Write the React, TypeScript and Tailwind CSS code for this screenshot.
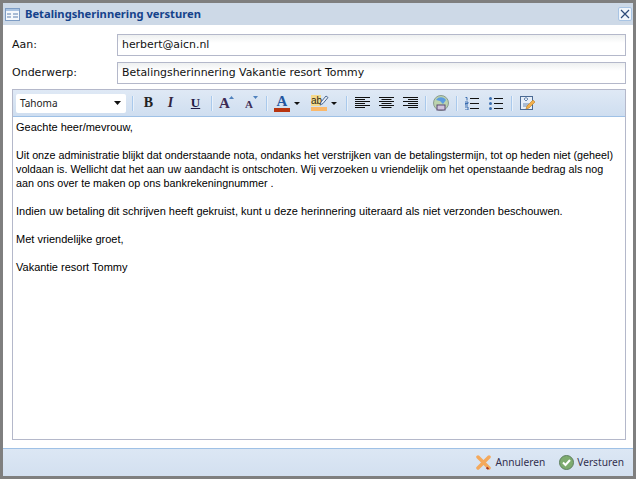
const Sep = () => (
  <div className="h-[15px] w-[2px] border-l border-[#a9c9ec] bg-[#e9f1fa]" />
);

const Lines = ({ kind }: { kind: "left" | "center" | "right" }) => {
  const rows = [15, 10, 15, 10, 15, 10];
  return (
    <svg width="15" height="12" viewBox="0 0 15 12">
      {rows.map((w, i) => {
        const x = kind === "left" ? 0 : kind === "center" ? (15 - w) / 2 : 15 - w;
        return <rect key={i} x={x} y={i * 2} width={w} height="1" fill="#111" />;
      })}
    </svg>
  );
};

const Caret = () => (
  <svg width="6" height="3" viewBox="0 0 6 3">
    <path d="M0 0h6L3 3z" fill="#111" />
  </svg>
);

const labelCls = "w-[105px] pt-[1px] font-['DejaVu_Sans',sans-serif] text-[11px] text-[#111]";
const inputCls =
  "flex h-[22px] flex-1 items-center border border-[#b4b8ca] bg-gradient-to-b from-[#eef0f0] to-white to-40% pl-[4px] pt-[1px] font-['DejaVu_Sans',sans-serif] text-[10.9px] text-[#111]";

export default function App() {
  return (
    <div className="flex h-[479px] w-[636px] flex-col overflow-hidden border-[3px] border-[#7f7f7f] bg-white font-['Liberation_Sans',sans-serif]">
      <div className="flex h-[22px] shrink-0 items-center bg-[#cdd9e7] pl-[2px] pr-[1px]">
        <svg width="15" height="13" viewBox="0 0 15 13" className="mr-[5px]">
          <rect x="0.5" y="0.5" width="14" height="12" fill="#f4f8fc" stroke="#7d9cc4" />
          <rect x="1" y="1" width="13" height="2" fill="#a9c3e2" />
          <path d="M2 6h4M2 9h4M8 6h5M8 9h5" stroke="#5b7fae" />
        </svg>
        <span className="font-['Noto_Sans',sans-serif] text-[11.2px] font-bold text-[#15428b]">
          Betalingsherinnering versturen
        </span>
        <button className="ml-auto flex h-[14px] w-[14px] items-center justify-center rounded-[2px] border border-[#a8c4e4] bg-[#f0f5fb]">
          <svg width="10" height="10" viewBox="0 0 10 10">
            <path d="M1 1l8 8M9 1l-8 8" stroke="#2c4a78" strokeWidth="1.2" />
          </svg>
        </button>
      </div>

      <div className="flex min-h-0 flex-1 flex-col pl-[9px] pr-[7px] pt-[9px] pb-[8px]">
        <div className="flex h-[22px] items-center">
          <label className={labelCls}>Aan:</label>
          <div className={inputCls}>herbert@aicn.nl</div>
        </div>
        <div className="mt-[6px] flex h-[22px] items-center">
          <label className={labelCls}>Onderwerp:</label>
          <div className={inputCls}>Betalingsherinnering Vakantie resort Tommy</div>
        </div>

        <div className="mt-[5px] flex min-h-0 flex-1 flex-col border border-[#b4b8ca]">
          <div className="flex h-[27px] shrink-0 items-center border-b border-[#9fc1e6] bg-gradient-to-b from-[#dfe9f5] to-[#cfdef0] pl-[3px]">
            <div className="flex h-[19px] w-[110px] items-center justify-between rounded-[2px] bg-white pl-[4px] pr-[5px] font-['Noto_Sans',sans-serif] text-[10px] text-[#222]">
              Tahoma
              <svg width="7" height="4" viewBox="0 0 7 4">
                <path d="M0 0h7L3.5 4z" fill="#111" />
              </svg>
            </div>
            <div className="ml-[6px]">
              <Sep />
            </div>
            <div className="ml-[5px] flex w-[19px] justify-center font-['Liberation_Serif',serif] text-[14px] leading-[16px] font-bold text-[#222]">B</div>
            <div className="ml-[3px] flex w-[19px] justify-center font-['Liberation_Serif',serif] text-[14px] leading-[16px] font-bold italic text-[#33243f]">I</div>
            <div className="ml-[6px] flex w-[19px] justify-center font-['Liberation_Serif',serif] text-[13px] leading-[16px] font-bold text-[#1f1b45] underline">U</div>
            <div className="ml-[6px]">
              <Sep />
            </div>
            <div className="ml-[6px] flex h-[16px] w-[15px] items-start">
              <span className="w-[10px] font-['Liberation_Serif',serif] text-[15px] leading-[17px] font-bold text-[#3d2c55]">A</span>
              <svg width="5" height="3" viewBox="0 0 5 3" className="mt-[1px]">
                <path d="M0 3h5L2.500 0z" fill="#4f81bd" />
              </svg>
            </div>
            <div className="ml-[11px] flex h-[16px] w-[13px] items-start">
              <span className="mt-[2px] w-[8px] font-['Liberation_Serif',serif] text-[11px] leading-[15px] font-bold text-[#3d2c55]">A</span>
              <svg width="5" height="3" viewBox="0 0 5 3" className="mt-[1px]">
                <path d="M0 0h5L2.500 3z" fill="#4f81bd" />
              </svg>
            </div>
            <div className="ml-[8px]">
              <Sep />
            </div>
            <div className="ml-[6px] flex w-[16px] flex-col items-center">
              <span className="h-[12px] font-['Liberation_Serif',serif] text-[15px] leading-[13px] font-bold text-[#24569f]">A</span>
              <span className="mt-[1px] h-[4px] w-[16px] bg-[#b8340f]" />
            </div>
            <div className="ml-[4px]">
              <Caret />
            </div>
            <div className="relative ml-[11px] flex w-[16px] flex-col items-start">
              <span className="h-[11px] w-[10px] bg-[#f5d98a] font-['Liberation_Sans',sans-serif] text-[10px] leading-[11px] text-[#2e2a18]">ab</span>
              <span className="mt-[1px] h-[4px] w-[16px] bg-[#fbb869]" />
              <svg width="10" height="11" viewBox="0 0 10 11" className="absolute left-[8px] top-0">
                <path d="M1 10l1-3 5-6 2 1.500-5 6z" fill="#e8eef7" stroke="#3c5a85" strokeWidth="0.9" />
              </svg>
            </div>
            <div className="ml-[4px]">
              <Caret />
            </div>
            <div className="ml-[9px]">
              <Sep />
            </div>
            <div className="ml-[7px]">
              <Lines kind="left" />
            </div>
            <div className="ml-[9px]">
              <Lines kind="center" />
            </div>
            <div className="ml-[9px]">
              <Lines kind="right" />
            </div>
            <div className="ml-[7px]">
              <Sep />
            </div>
            <svg width="16" height="16" viewBox="0 0 16 16" className="ml-[6px]">
              <circle cx="8" cy="8" r="7.500" fill="#bcd3ae" stroke="#8a9c92" />
              <path d="M3 5c3-4 8-3 10 0l-3 4-3-3z" fill="#5c9ce0" />
              <rect x="4" y="10" width="8" height="5" fill="#cfc3dc" stroke="#5a4a72" />
            </svg>
            <div className="ml-[7px]">
              <Sep />
            </div>
            <svg width="14" height="13" viewBox="0 0 14 13" className="ml-[7px]">
              <path d="M5 1.500h9M5 6.500h9M5 11.500h9" stroke="#111" />
              <path d="M0.500 0.500h1.500v3M0 5h3v1.500H0V8h3M0 10h3v3H0" stroke="#3a6db0" fill="none" />
            </svg>
            <svg width="14" height="13" viewBox="0 0 14 13" className="ml-[10px]">
              <path d="M5 1.500h9M5 6.500h9M5 11.500h9" stroke="#111" />
              <circle cx="1.500" cy="1.500" r="1.500" fill="#3a6db0" />
              <circle cx="1.500" cy="6.500" r="1.500" fill="#3a6db0" />
              <circle cx="1.500" cy="11.500" r="1.500" fill="#3a6db0" />
            </svg>
            <div className="ml-[8px]">
              <Sep />
            </div>
            <svg width="16" height="15" viewBox="0 0 16 15" className="ml-[7px]">
              <rect x="0.500" y="0.500" width="12" height="13" fill="#e6eef8" stroke="#4a6a94" />
              <path d="M3 8h6M3 10h5M4 3l2-1.500L8 3 6 5z" stroke="#6a89b0" fill="none" />
              <path d="M6 13l1-3 6-6 2 2-6 6z" fill="#f2b04c" stroke="#b87a20" strokeWidth="0.6" />
            </svg>
          </div>
          <div className="flex-1 bg-white pl-[3px] pr-[3px] pt-[3px] text-[11px] leading-[14px] text-black">
            <p>Geachte heer/mevrouw,</p>
            <p className="mt-[14px] text-[10.75px]">
              Uit onze administratie blijkt dat onderstaande nota, ondanks het verstrijken van de betalingstermijn, tot op heden niet (geheel) voldaan is. Wellicht dat het aan uw aandacht is ontschoten. Wij verzoeken u vriendelijk om het openstaande bedrag als nog aan ons over te maken op ons bankrekeningnummer .
            </p>
            <p className="mt-[14px]">
              Indien uw betaling dit schrijven heeft gekruist, kunt u deze herinnering uiteraard als niet verzonden beschouwen.
            </p>
            <p className="mt-[14px]">Met vriendelijke groet,</p>
            <p className="mt-[14px]">Vakantie resort Tommy</p>
          </div>
        </div>
      </div>

      <div className="flex h-[28px] shrink-0 items-center justify-end border-t border-[#9fc1e6] bg-gradient-to-b from-[#dce7f4] to-[#d3e0f0] pr-[9px] font-['Noto_Sans',sans-serif] text-[10.2px] text-[#33304f]">
        <svg width="15" height="15" viewBox="0 0 15 15" className="mr-[4px]">
          <path d="M2 2l11 11M13 2L2 13" stroke="#f4a95c" strokeWidth="3.500" strokeLinecap="round" />
          <path d="M10.500 12.500l2 1.500" stroke="#a8321c" strokeWidth="2" />
        </svg>
        Annuleren
        <svg width="15" height="15" viewBox="0 0 15 15" className="ml-[14px] mr-[3px]">
          <circle cx="7.500" cy="7.500" r="7" fill="#7dab6f" stroke="#5e7f60" />
          <path d="M4 7.500l2.500 2.500L11 5" stroke="#fff" strokeWidth="2" fill="none" />
        </svg>
        Versturen
      </div>
    </div>
  );
}
